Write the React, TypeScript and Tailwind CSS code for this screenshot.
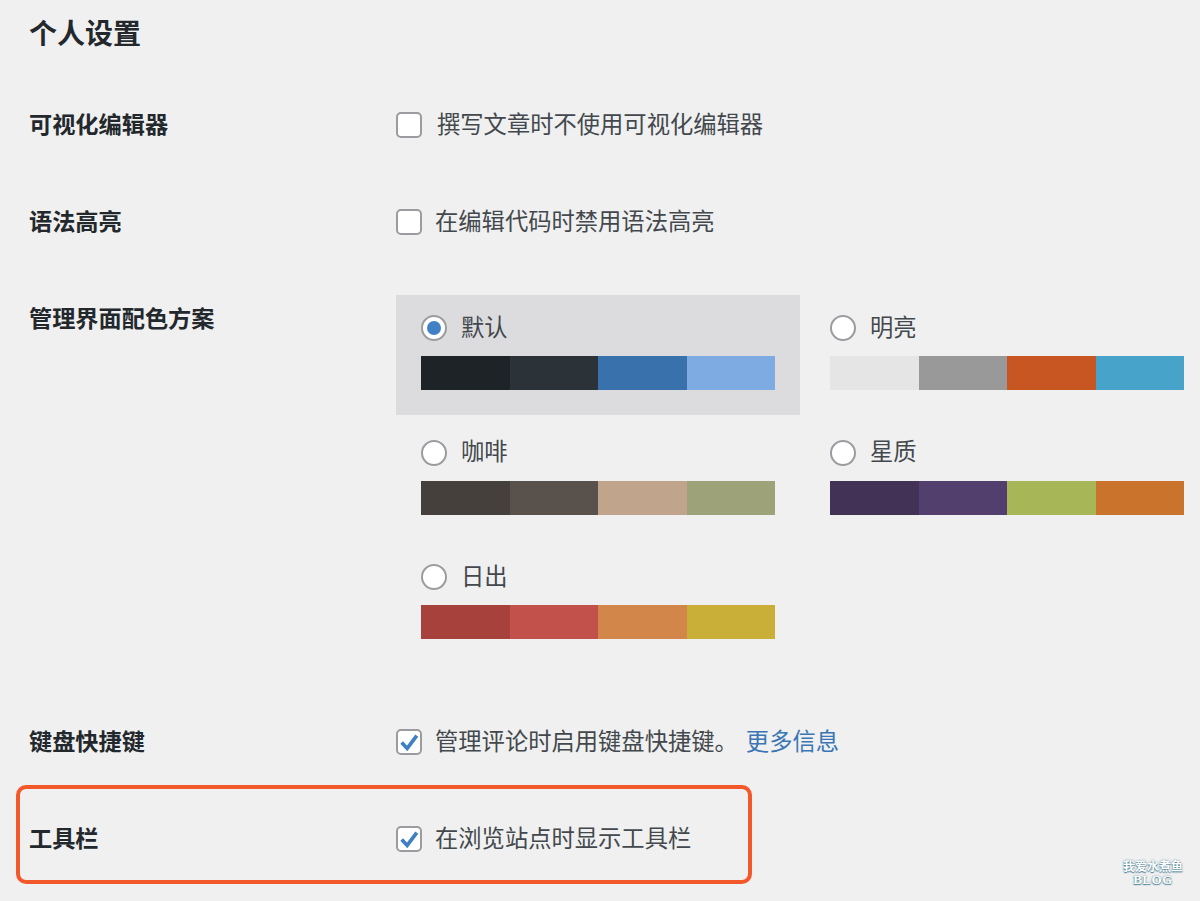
const font = "font-['Liberation_Sans','Noto_Sans_CJK_SC',sans-serif]";

const schemes = [
  { name: '默认', colors: ['bg-[#1e2327]', 'bg-[#2c3338]', 'bg-[#3871ab]', 'bg-[#7eace2]'], selected: true },
  { name: '明亮', colors: ['bg-[#e5e5e5]', 'bg-[#999999]', 'bg-[#c75622]', 'bg-[#47a3c9]'] },
  { name: '咖啡', colors: ['bg-[#46403c]', 'bg-[#59524c]', 'bg-[#c0a58c]', 'bg-[#9ea278]'] },
  { name: '星质', colors: ['bg-[#413256]', 'bg-[#523f6d]', 'bg-[#a7b656]', 'bg-[#c9732d]'] },
  { name: '日出', colors: ['bg-[#a6423b]', 'bg-[#c1514a]', 'bg-[#d2864a]', 'bg-[#c9ae37]'] },
];

function Checkbox({ checked }: { checked?: boolean }) {
  return (
    <span className="flex h-[26px] w-[26px] shrink-0 items-center justify-center rounded-[5px] border-2 border-[#9a9ca0] bg-white">
      {checked && (
        <svg viewBox="0 0 24 24" className="h-[22px] w-[22px]" fill="none" stroke="#3f80c4" strokeWidth="4">
          <path d="M4 12.5l6 6.5L20.5 5" />
        </svg>
      )}
    </span>
  );
}

function Row({ label, className, children }: { label: string; className: string; children: React.ReactNode }) {
  return (
    <div className={`flex ${className}`}>
      <div className="w-[367px] shrink-0 text-[23.2px] leading-[34px] font-bold text-[#23282d]">{label}</div>
      <div className="flex items-center text-[23.3px] leading-[34px] text-[#43484d]">{children}</div>
    </div>
  );
}

function Scheme({ name, colors, selected }: { name: string; colors: string[]; selected?: boolean }) {
  return (
    <div className={`h-[120px] w-[404px] px-[25px] pt-[19px] ${selected ? 'bg-[#dcdcde]' : ''}`}>
      <div className="flex h-[28px] items-center">
        <span className="flex h-[26px] w-[26px] items-center justify-center rounded-full border-2 border-[#9a9ca0] bg-white">
          {selected && <span className="h-[14px] w-[14px] rounded-full bg-[#4180c4]" />}
        </span>
        <span className="ml-[14px] text-[23.3px] text-[#43484d]">{name}</span>
      </div>
      <div className="mt-[14px] flex h-[34px] w-[354px]">
        {colors.map((c) => (
          <div key={c} className={`flex-1 ${c}`} />
        ))}
      </div>
    </div>
  );
}

export default function App() {
  return (
    <div className={`relative h-[901px] w-[1200px] overflow-hidden bg-[#f0f0f0] pt-[15px] pl-[29px] ${font}`}>
      <h1 className="text-[28px] leading-[40px] font-bold text-[#23282d]">个人设置</h1>

      <Row label="可视化编辑器" className="mt-[53px]">
        <Checkbox />
        <span className="ml-[15px]">撰写文章时不使用可视化编辑器</span>
      </Row>

      <Row label="语法高亮" className="mt-[63px]">
        <Checkbox />
        <span className="ml-[13px]">在编辑代码时禁用语法高亮</span>
      </Row>

      <div className="mt-[56px] flex">
        <div className="w-[367px] shrink-0 pt-[7px] text-[23.2px] leading-[34px] font-bold text-[#23282d]">管理界面配色方案</div>
        <div className="grid w-[820px] grid-cols-[409px_409px] gap-y-[4.5px]">
          {schemes.map((s) => (
            <Scheme key={s.name} {...s} />
          ))}
        </div>
      </div>

      <Row label="键盘快捷键" className="mt-[61px]">
        <Checkbox checked />
        <span className="ml-[13px]">管理评论时启用键盘快捷键。</span>
        <a className="ml-[8px] text-[#3a76b4]">更多信息</a>
      </Row>

      <Row label="工具栏" className="mt-[63px]">
        <Checkbox checked />
        <span className="ml-[13px]">在浏览站点时显示工具栏</span>
      </Row>

      <div className="absolute top-[785px] left-[16px] h-[99px] w-[736px] rounded-[10px] border-[4px] border-[#f2582a]" />

      <div className="absolute top-[861px] left-[1118px] w-[70px] text-center text-white [text-shadow:0_0_2px_#4d7f94,0_1px_1px_#4d7f94]">
        <div className="text-[12px] leading-[13px] font-bold">我爱水煮鱼</div>
        <div className="font-['Liberation_Serif',serif] text-[13px] leading-[12px] font-bold tracking-[0.5px]">BLOG</div>
      </div>
    </div>
  );
}
